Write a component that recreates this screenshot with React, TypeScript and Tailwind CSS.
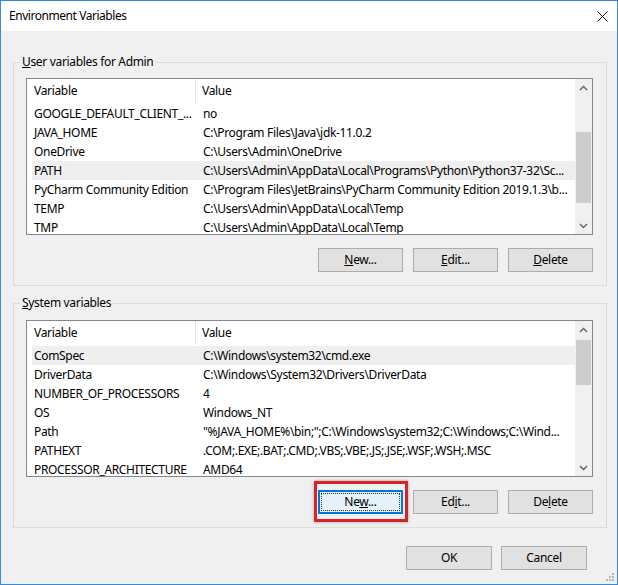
import React from 'react';

type Row = { name: string; value: string; sel?: boolean };

const userRows: Row[] = [
  { name: 'GOOGLE_DEFAULT_CLIENT_...', value: 'no' },
  { name: 'JAVA_HOME', value: 'C:\\Program Files\\Java\\jdk-11.0.2' },
  { name: 'OneDrive', value: 'C:\\Users\\Admin\\OneDrive' },
  { name: 'PATH', value: 'C:\\Users\\Admin\\AppData\\Local\\Programs\\Python\\Python37-32\\Sc...', sel: true },
  { name: 'PyCharm Community Edition', value: 'C:\\Program Files\\JetBrains\\PyCharm Community Edition 2019.1.3\\b...' },
  { name: 'TEMP', value: 'C:\\Users\\Admin\\AppData\\Local\\Temp' },
  { name: 'TMP', value: 'C:\\Users\\Admin\\AppData\\Local\\Temp' },
];

const sysRows: Row[] = [
  { name: 'ComSpec', value: 'C:\\Windows\\system32\\cmd.exe', sel: true },
  { name: 'DriverData', value: 'C:\\Windows\\System32\\Drivers\\DriverData' },
  { name: 'NUMBER_OF_PROCESSORS', value: '4' },
  { name: 'OS', value: 'Windows_NT' },
  { name: 'Path', value: '"%JAVA_HOME%\\bin;";C:\\Windows\\system32;C:\\Windows;C:\\Wind...' },
  { name: 'PATHEXT', value: '.COM;.EXE;.BAT;.CMD;.VBS;.VBE;.JS;.JSE;.WSF;.WSH;.MSC' },
  { name: 'PROCESSOR_ARCHITECTURE', value: 'AMD64' },
];

function ChevronUp() {
  return (
    <svg width="9" height="6" viewBox="0 0 9 6">
      <path d="M1 5 L4.5 1.5 L8 5" fill="none" stroke="#606060" strokeWidth="1.4" />
    </svg>
  );
}

function ChevronDown() {
  return (
    <svg width="9" height="6" viewBox="0 0 9 6">
      <path d="M1 1 L4.5 4.5 L8 1" fill="none" stroke="#606060" strokeWidth="1.4" />
    </svg>
  );
}

function ListBox({ rows, thumbTop, thumbH }: { rows: Row[]; thumbTop: number; thumbH: number }) {
  return (
    <div className="flex h-[157px] w-[567px] border border-[#828790] bg-white">
      <div className="min-w-0 flex-1 overflow-hidden">
        <div className="flex h-[24px] items-center">
          <div className="flex h-full w-[169px] shrink-0 items-center border-r border-[#e5e5e5] pl-[7px]">Variable</div>
          <div className="pl-[6px]">Value</div>
        </div>
        <div className="mt-[1px]">
          {rows.map((r) => (
            <div
              key={r.name}
              className={r.sel ? 'ml-[5px] flex h-[19px] items-center bg-[#efefef]' : 'ml-[5px] flex h-[19px] items-center'}
            >
              <div className="w-[164px] shrink-0 overflow-hidden whitespace-nowrap pl-[2px]">{r.name}</div>
              <div className="whitespace-nowrap pl-[7px]">{r.value}</div>
            </div>
          ))}
        </div>
      </div>
      <div className="flex w-[17px] shrink-0 flex-col bg-[#f0f0f0]">
        <div className="flex h-[17px] items-center justify-center">
          <ChevronUp />
        </div>
        <div className="flex-1">
          <div className="mx-[1px] bg-[#cdcdcd]" style={{ marginTop: thumbTop, height: thumbH }} />
        </div>
        <div className="flex h-[17px] items-center justify-center">
          <ChevronDown />
        </div>
      </div>
    </div>
  );
}

function Btn({ children }: { children: React.ReactNode }) {
  return (
    <button className="h-[24px] w-[85px] border border-[#adadad] bg-[#e1e1e1] text-[12px] leading-none text-black">
      {children}
    </button>
  );
}

export default function App() {
  return (
    <div className="relative flex h-[585px] w-[618px] flex-col border border-[#3a89d6] bg-[#f0f0f0] font-['Noto_Sans',sans-serif] text-[12px] tracking-[-0.33px] text-black">
      <div className="flex h-[30px] shrink-0 items-center justify-between bg-white pl-[8px] pr-[9px]">
        <span className="text-[12px] tracking-[-0.45px]">Environment Variables</span>
        <svg width="11" height="11" viewBox="0 0 11 11">
          <path d="M0.5 0.5 L10.5 10.5 M10.5 0.5 L0.5 10.5" stroke="#111" strokeWidth="1" />
        </svg>
      </div>

      <fieldset className="ml-[12px] mt-[23px] w-[594px] min-w-0 border border-[#dcdcdc] pb-[13px] pl-[12px] pr-[13px]">
        <legend className="ml-[-6px] px-[2px] leading-[16px]">
          <span className="underline">U</span>ser variables for Admin
        </legend>
        <div className="mt-[8px]">
          <ListBox rows={userRows} thumbTop={36} thumbH={71} />
        </div>
        <div className="mt-[13px] flex justify-end gap-[10px]">
          <Btn>
            <span className="underline">N</span>ew...
          </Btn>
          <Btn>
            <span className="underline">E</span>dit...
          </Btn>
          <Btn>
            <span className="underline">D</span>elete
          </Btn>
        </div>
      </fieldset>

      <fieldset className="ml-[12px] mt-[9px] w-[594px] min-w-0 border border-[#dcdcdc] pb-[13px] pl-[12px] pr-[13px]">
        <legend className="ml-[-6px] px-[2px] leading-[16px]">
          <span className="underline">S</span>ystem variables
        </legend>
        <div className="mt-[9px]">
          <ListBox rows={sysRows} thumbTop={2} thumbH={45} />
        </div>
        <div className="mt-[13px] flex justify-end gap-[10px]">
          <div className="relative">
            <button className="relative h-[24px] w-[85px] border-2 border-[#0078d7] bg-[#e5f1fb] text-[12px] leading-none text-black">
              <span className="absolute inset-[1px] border border-dotted border-[#333]" />
              <span className="relative">
                Ne<span className="underline">w</span>...
              </span>
            </button>
            <span className="pointer-events-none absolute bottom-[-8px] left-[-4px] right-[-5px] top-[-9px] border-[3px] border-[#d8232a] shadow-[0_0_3px_rgba(0,0,0,0.35)]" />
          </div>
          <Btn>
            Ed<span className="underline">i</span>t...
          </Btn>
          <Btn>
            De<span className="underline">l</span>ete
          </Btn>
        </div>
      </fieldset>

      <div className="mr-[30px] mt-[18px] flex justify-end gap-[9px]">
        <button className="h-[24px] w-[86px] border border-[#adadad] bg-[#e1e1e1] text-[12px] leading-none">OK</button>
        <button className="h-[24px] w-[86px] border border-[#adadad] bg-[#e1e1e1] text-[12px] leading-none">Cancel</button>
      </div>

      <svg className="absolute bottom-[2px] right-[2px]" width="10" height="10" viewBox="0 0 10 10">
        <rect x="7" y="1" width="2" height="2" fill="#b8b8b8" />
        <rect x="4" y="4" width="2" height="2" fill="#b8b8b8" />
        <rect x="7" y="4" width="2" height="2" fill="#b8b8b8" />
        <rect x="1" y="7" width="2" height="2" fill="#b8b8b8" />
        <rect x="4" y="7" width="2" height="2" fill="#b8b8b8" />
        <rect x="7" y="7" width="2" height="2" fill="#b8b8b8" />
      </svg>
    </div>
  );
}
